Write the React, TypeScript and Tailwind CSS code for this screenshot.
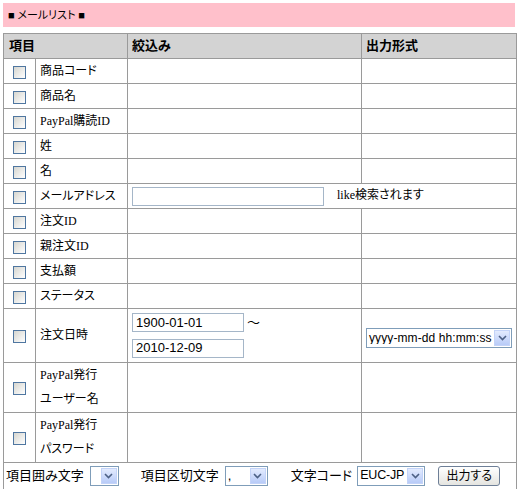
import React from "react";

const FONT = '"Liberation Serif", "Noto Sans CJK JP", serif';
const ARIAL = '"Liberation Sans", Arial, sans-serif';

function Check() {
  return (
    <span className="inline-block w-[13px] h-[13px] border border-[#4f76a0] bg-linear-to-br from-[#d6d6d0] to-white align-middle" />
  );
}

function Chevron() {
  return (
    <svg width="9" height="6" viewBox="0 0 9 6">
      <path d="M1 1 L4.5 4.5 L8 1" fill="none" stroke="#4d6185" strokeWidth="1.6" />
    </svg>
  );
}

function Select({ className, text, textClass = "text-[13px]" }: { className: string; text: string; textClass?: string }) {
  return (
    <span
      className={
        "inline-flex items-center h-[20px] border border-[#7f9db9] bg-white align-middle shrink-0 " + className
      }
    >
      <span
        className={"flex-1 min-w-0 overflow-hidden whitespace-nowrap pl-[2px] leading-none text-black " + textClass}
        style={{ fontFamily: ARIAL }}
      >
        {text}
      </span>
      <span className="w-[16px] h-[16px] mr-[1px] shrink-0 bg-linear-to-b from-[#e3ebfe] to-[#b8cbf8] border border-[#c3d3f8] flex items-center justify-center">
        <Chevron />
      </span>
    </span>
  );
}

function TextInput({ className, value }: { className: string; value?: string }) {
  return (
    <span
      className={
        "inline-flex items-center border border-[#a5b6c8] bg-white align-middle pl-[3px] text-[13px] text-black whitespace-nowrap " +
        className
      }
      style={{ fontFamily: ARIAL }}
    >
      {value}
    </span>
  );
}

const simpleRows = [
  "商品コード",
  "商品名",
  "PayPal購読ID",
  "姓",
  "名",
  "メールアドレス",
  "注文ID",
  "親注文ID",
  "支払額",
  "ステータス",
];

export default function App() {
  const td = "border border-[#9a9a9a] p-0";
  return (
    <div
      className="w-[518px] h-[489px] bg-white text-black text-[12px] [font-feature-settings:'palt'] overflow-hidden"
      style={{ fontFamily: FONT }}
    >
      <div className="mx-[3px] mt-[3px] h-[24px] bg-[#ffc0cb] flex items-center pl-[5px] text-[11px]">
        ■ メールリスト ■
      </div>
      <table className="table-fixed border-collapse ml-[3px] mt-[6px] w-[513px]">
        <colgroup>
          <col className="w-[32px]" />
          <col className="w-[92px]" />
          <col className="w-[234px]" />
          <col className="w-[155px]" />
        </colgroup>
        <tbody>
          <tr className="h-[25px] bg-[#d3d3d3] text-[13px] font-bold">
            <td colSpan={2} className={td + " pl-[5px]"}>項目</td>
            <td className={td + " pl-[4px]"}>絞込み</td>
            <td className={td + " pl-[4px]"}>出力形式</td>
          </tr>
          {simpleRows.map((r) => (
            <tr key={r} className="h-[25px]">
              <td className={td + " text-center"}>
                <Check />
              </td>
              <td className={td + " pl-[4px]"}>{r}</td>
              {r === "メールアドレス" ? (
                <td colSpan={2} className={td + " pl-[4px] whitespace-nowrap"}>
                  <TextInput className="w-[192px] h-[19px]" />
                  <span className="ml-[13px] text-[12px]">like検索されます</span>
                </td>
              ) : (
                <>
                  <td className={td}></td>
                  <td className={td}></td>
                </>
              )}
            </tr>
          ))}
          <tr className="h-[50px]">
            <td className={td + " text-center"}>
              <Check />
            </td>
            <td className={td + " pl-[4px]"}>注文日時</td>
            <td className={td + " pl-[4px]"}>
              <div className="flex flex-col gap-[6px] py-[4px]">
                <div className="flex items-center">
                  <TextInput className="w-[112px] h-[19px]" value="1900-01-01" />
                  <span className="ml-[3px] text-[13px]">～</span>
                </div>
                <TextInput className="w-[112px] h-[19px]" value="2010-12-09" />
              </div>
            </td>
            <td className={td + " pl-[4px]"}>
              <div className="pt-[6px] flex">
                <Select className="w-[146px]" text="yyyy-mm-dd hh:mm:ss" textClass="text-[12px] tracking-[0.1px]" />
              </div>
            </td>
          </tr>
          {["ユーザー名", "パスワード"].map((s) => (
            <tr key={s} className="h-[50px]">
              <td className={td + " text-center"}>
                <Check />
              </td>
              <td className={td + " pl-[4px] leading-[24px]"}>
                PayPal発行
                <br />
                {s}
              </td>
              <td className={td}></td>
              <td className={td}></td>
            </tr>
          ))}
          <tr className="h-[27px]">
            <td colSpan={4} className={td + " pl-[2px] text-[13px]"}>
              <div className="flex items-center whitespace-nowrap">
                <span>項目囲み文字</span>
                <Select className="w-[29px] ml-[6px]" text="" />
                <span className="ml-[22px]">項目区切文字</span>
                <Select className="w-[43px] ml-[6px]" text="," />
                <span className="ml-[23px]">文字コード</span>
                <Select className="w-[68px] ml-[5px]" text="EUC-JP" textClass="text-[12.5px] tracking-[-0.2px]" />
                <button className="ml-[13px] w-[62px] h-[20px] shrink-0 border border-[#6e7f97] rounded-[3px] bg-linear-to-b from-white to-[#e4e4e0] text-[12px] leading-none">
                  出力する
                </button>
              </div>
            </td>
          </tr>
        </tbody>
      </table>
    </div>
  );
}
